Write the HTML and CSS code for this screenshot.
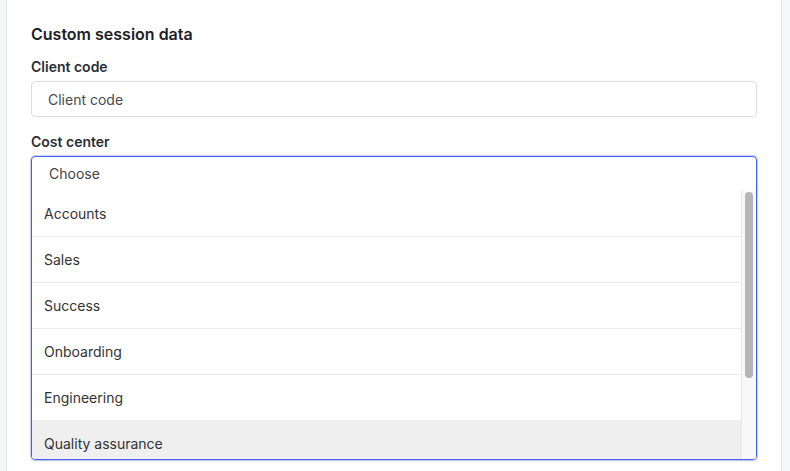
FILE: index.html
```html
<!DOCTYPE html>
<html lang="en">

<head>
    <meta charset="UTF-8">
    <meta name="viewport" content="width=device-width, initial-scale=1.0">
    <title>Custom session data</title>
    <link rel="stylesheet" href="styles.css">
</head>

<body>
    <section class="card">
        <h2 class="card_title">Custom session data</h2>

        <label class="field_label" for="client_code">Client code</label>
        <input type="text" id="client_code" class="text_input" placeholder="Client code">

        <div class="field_label cost_label">Cost center</div>
        <div class="select_box">
            <div class="select_value">Choose</div>
            <div class="list_wrap">
                <ul class="option_list">
                    <li class="option">Accounts</li>
                    <li class="option">Sales</li>
                    <li class="option">Success</li>
                    <li class="option">Onboarding</li>
                    <li class="option">Engineering</li>
                    <li class="option option_hover">Quality assurance</li>
                </ul>
                <div class="scroll_track">
                    <div class="scroll_thumb"></div>
                </div>
            </div>
        </div>
    </section>
</body>

</html>
```

FILE: styles.css
```css
html,
body {
    height: 100%;
}

body {
    margin: 0;
    overflow: hidden;
    background-color: #f5f6f8;
    font-family: Inter, "Noto Sans", sans-serif;
    color: #1f2329;
}

.card {
    box-sizing: border-box;
    width: 776px;
    min-height: 100%;
    margin-left: 6px;
    padding: 24px 24px 20px 24px;
    background-color: #ffffff;
    border-left: 1px solid #e3e5e9;
    border-right: 1px solid #e3e5e9;
}

.card_title {
    margin: 0;
    font-size: 16px;
    line-height: 20px;
    font-weight: 600;
    color: #1d2127;
}

.field_label {
    display: block;
    margin-top: 14px;
    font-size: 14px;
    line-height: 18px;
    font-weight: 600;
    color: #2a2e35;
}

.cost_label {
    margin-top: 16px;
}

.text_input {
    display: block;
    box-sizing: border-box;
    width: 100%;
    height: 36px;
    margin-top: 5px;
    padding: 0 16px;
    border: 1px solid #d9dde3;
    border-radius: 4px;
    font-family: inherit;
    font-size: 14px;
    outline: none;
}

.text_input::placeholder {
    color: #474a4f;
}

.select_box {
    box-sizing: border-box;
    margin-top: 5px;
    border: 1px solid #4661f2;
    border-radius: 4px;
    box-shadow: 0 0 0 1px rgba(70, 97, 242, 0.25), 0 1px 3px rgba(0, 0, 0, 0.12);
    overflow: hidden;
    font-size: 14px;
    color: #333333;
}

.select_value {
    height: 34px;
    line-height: 34px;
    padding-left: 17px;
    color: #424549;
}

.list_wrap {
    display: flex;
    height: 268px;
}

.option_list {
    flex: 1;
    list-style: none;
    margin: 0;
    padding: 0;
    overflow: hidden;
}

.option {
    box-sizing: border-box;
    height: 46px;
    line-height: 45px;
    padding-left: 12px;
    border-bottom: 1px solid #ececec;
}

.option_hover {
    background-color: #efefef;
}

.scroll_track {
    box-sizing: border-box;
    width: 15px;
    padding: 1px 3px 0 3px;
    background-color: #f8f8f8;
    border-left: 1px solid #e6e6e6;
}

.scroll_thumb {
    height: 186px;
    background-color: #b5b5b5;
    border-radius: 5px;
}
```
